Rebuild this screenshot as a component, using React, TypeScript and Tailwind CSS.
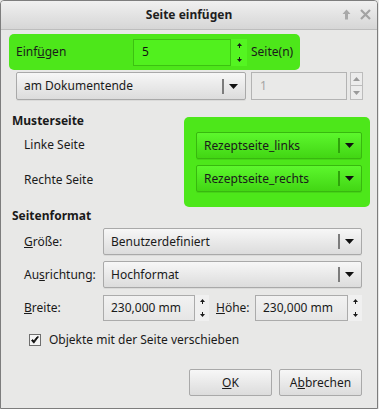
import React from "react";

const font = { fontFamily: '"Noto Sans", "Open Sans", sans-serif' };

function UpArrow({ color = "#1a1a1a" }: { color?: string }) {
  return (
    <svg width="5" height="5" viewBox="0 0 5 5">
      <path d="M2.5 0 L5 3 L0 3 Z" fill={color} />
      <rect x="2" y="3" width="1" height="2" fill={color} />
    </svg>
  );
}
function DownArrow({ color = "#1a1a1a" }: { color?: string }) {
  return (
    <svg width="5" height="5" viewBox="0 0 5 5">
      <rect x="2" y="0" width="1" height="2" fill={color} />
      <path d="M0 2 L5 2 L2.5 5 Z" fill={color} />
    </svg>
  );
}

function Spin({ w = 14, bg = "" }: { w?: number; bg?: string }) {
  return (
    <div
      className={`flex flex-col items-center justify-between py-[4px] h-full ${bg}`}
      style={{ width: w }}
    >
      <UpArrow />
      <DownArrow />
    </div>
  );
}

function Caret({ sep = "#7c7c7c" }: { sep?: string }) {
  return (
    <div className="flex items-center h-full pr-[7px]">
      <div className="w-[2px] h-[15px]" style={{ background: sep }} />
      <svg width="9" height="5" viewBox="0 0 9 5" className="ml-[5px]">
        <path d="M0 0 L9 0 L4.5 5 Z" fill="#111" />
      </svg>
    </div>
  );
}

function Combo({
  text,
  w,
  h = 27,
  green = false,
}: {
  text: string;
  w: number;
  h?: number;
  green?: boolean;
}) {
  return (
    <div
      className={
        green
          ? "flex items-center justify-between rounded-[2px] border border-[#38b80f] bg-gradient-to-b from-[#5cf72c] to-[#42d613] shadow-[0_1px_0_rgba(0,0,0,0.08)]"
          : "flex items-center justify-between rounded-[2px] border border-[#a9a9a9] bg-gradient-to-b from-[#f7f7f7] to-[#dcdcdc] shadow-[0_1px_0_rgba(0,0,0,0.06)]"
      }
      style={{ width: w, height: h }}
    >
      <span className="pl-[7px] text-[12px] leading-[16px] text-[#1a1a1a]">
        {text}
      </span>
      <Caret sep={green ? "#2fa30b" : "#7c7c7c"} />
    </div>
  );
}

export default function App() {
  return (
    <div className="w-[379px] h-[409px] bg-[#e8e8e7]" style={font}>
      <div className="w-[378px] h-[409px] border border-[#7d7d7d] rounded-t-[4px] bg-[#e8e8e7] flex flex-col overflow-hidden">
        {/* Title bar */}
        <div className="h-[29px] shrink-0 border-b border-[#bdbdbd] bg-gradient-to-b from-[#f0f0f0] to-[#d6d6d6] flex items-center relative">
          <div className="flex-1 text-center text-[12px] font-bold leading-[16px] text-[#1e1e1e]">
            Seite einfügen
          </div>
          <div className="absolute right-[6px] top-[8px] flex items-center gap-[9px]">
            <svg width="9" height="11" viewBox="0 0 9 11">
              <path d="M4.5 0.5 L8.5 5 L6 5 L6 10.5 L3 10.5 L3 5 L0.5 5 Z" fill="#a9a9a9" />
            </svg>
            <svg width="11" height="11" viewBox="0 0 11 11">
              <path d="M1 1 L10 10 M10 1 L1 10" stroke="#a3a3a3" strokeWidth="2.2" />
            </svg>
          </div>
        </div>

        {/* Row 1 green */}
        <div className="mt-[4px] ml-[8px] w-[291px] h-[36px] rounded-[5px] bg-[#4de71a] flex items-center">
          <span className="pl-[7px] w-[124px] text-[12px] leading-[16px] text-[#1a1a1a]">
            Einf<u>ü</u>gen
          </span>
          <div className="w-[98px] h-[27px] border border-[#3cc111] bg-[#51f01e] flex items-center pl-[8px] text-[12px] leading-[16px] text-[#111]">
            5
          </div>
          <div className="h-[27px]">
            <Spin w={16} bg="bg-[#54f521]" />
          </div>
          <span className="ml-[4px] text-[12px] leading-[16px] text-[#1a1a1a]">
            Seite(n)
          </span>
        </div>

        {/* Row 2 */}
        <div className="mt-[2px] ml-[15px] flex items-start">
          <Combo text="am Dokumentende" w={230} h={28} />
          <div className="ml-[5px] w-[96px] h-[28px] border border-[#b3b3b3] bg-[#e9e9e8] flex items-center pl-[8px] text-[12px] leading-[16px] text-[#a5a5a5]">
            1
          </div>
          <div className="ml-[3px] flex flex-col">
            <div className="w-[13px] h-[14px] border border-[#bcbcbc] bg-[#ececec] flex items-center justify-center">
              <svg width="7" height="4" viewBox="0 0 7 4">
                <path d="M3.5 0 L7 4 L0 4 Z" fill="#9a9a9a" />
              </svg>
            </div>
            <div className="w-[13px] h-[14px] border border-t-0 border-[#bcbcbc] bg-[#ececec] flex items-center justify-center">
              <svg width="7" height="4" viewBox="0 0 7 4">
                <path d="M0 0 L7 0 L3.5 4 Z" fill="#9a9a9a" />
              </svg>
            </div>
          </div>
        </div>

        {/* Musterseite */}
        <div className="flex items-start">
          <div className="flex-1 pl-[11px] pt-[13px] flex flex-col">
            <span className="text-[12px] font-bold leading-[16px] text-[#1a1a1a]">
              Musterseite
            </span>
            <span className="mt-[8px] pl-[12px] text-[12px] leading-[16px] text-[#1a1a1a]">
              Linke Seite
            </span>
            <span className="mt-[19px] pl-[12px] text-[12px] leading-[16px] text-[#1a1a1a]">
              Rechte Seite
            </span>
          </div>
          <div className="mt-[17px] mr-[7px] w-[186px] h-[90px] rounded-[5px] bg-[#4de71a] flex flex-col pl-[12px] pt-[15px] gap-[6px]">
            <Combo text="Rezeptseite_links" w={166} green />
            <Combo text="Rezeptseite_rechts" w={166} green />
          </div>
        </div>

        {/* Seitenformat */}
        <div className="mt-[1px] pl-[11px] text-[12px] font-bold leading-[16px] text-[#1a1a1a]">
          Seitenformat
        </div>
        <div className="mt-[4px] flex items-center">
          <span className="pl-[23px] w-[102px] text-[12px] leading-[16px] text-[#1a1a1a]">
            <u>G</u>röße:
          </span>
          <Combo text="Benutzerdefiniert" w={259} />
        </div>
        <div className="mt-[6px] flex items-center">
          <span className="pl-[23px] w-[102px] text-[12px] leading-[16px] text-[#1a1a1a]">
            Au<u>s</u>richtung:
          </span>
          <Combo text="Hochformat" w={259} />
        </div>
        <div className="mt-[7px] flex items-center">
          <span className="pl-[23px] w-[102px] text-[12px] leading-[16px] text-[#1a1a1a]">
            <u>B</u>reite:
          </span>
          <div className="w-[92px] h-[26px] border border-[#ababab] bg-gradient-to-b from-[#f2f2f2] to-[#e6e6e6] flex items-center pl-[7px] text-[12px] leading-[16px] text-[#1a1a1a]">
            230,000 mm
          </div>
          <div className="h-[26px]">
            <Spin w={14} bg="bg-[#f0f0f0]" />
          </div>
          <span className="ml-[7px] w-[39px] text-[12px] leading-[16px] text-[#1a1a1a]">
            <u>H</u>öhe:
          </span>
          <div className="w-[93px] h-[26px] border border-[#ababab] bg-gradient-to-b from-[#f2f2f2] to-[#e6e6e6] flex items-center pl-[7px] text-[12px] leading-[16px] text-[#1a1a1a]">
            230,000 mm
          </div>
          <div className="h-[26px]">
            <Spin w={14} bg="bg-[#f0f0f0]" />
          </div>
        </div>

        {/* Checkbox */}
        <div className="mt-[11px] ml-[28px] flex items-center">
          <div className="w-[12px] h-[12px] border border-[#6e6e6e] bg-[#f4f4f4] flex items-center justify-center">
            <svg width="8" height="8" viewBox="0 0 8 8">
              <path d="M0.5 4.5 L2.8 7.2 L7.5 0.8 L6 0.8 L2.8 5 L1.8 3.6 Z" fill="#111" stroke="#111" strokeWidth="0.8" strokeLinejoin="round" />
            </svg>
          </div>
          <span className="ml-[8px] text-[12px] leading-[16px] text-[#1a1a1a]">
            Objekte mit der Seite verschieben
          </span>
        </div>

        {/* Buttons */}
        <div className="mt-[21px] mr-[15px] flex justify-end gap-[7px]">
          <div className="w-[83px] h-[27px] rounded-[2px] border border-[#a9a9a9] bg-gradient-to-b from-[#f7f7f7] to-[#dcdcdc] flex items-center justify-center text-[12px] leading-[16px] text-[#1a1a1a]">
            <u>O</u>K
          </div>
          <div className="w-[83px] h-[27px] rounded-[2px] border border-[#a9a9a9] bg-gradient-to-b from-[#f7f7f7] to-[#dcdcdc] flex items-center justify-center text-[12px] leading-[16px] text-[#1a1a1a]">
            A<u>b</u>brechen
          </div>
        </div>
      </div>
    </div>
  );
}
